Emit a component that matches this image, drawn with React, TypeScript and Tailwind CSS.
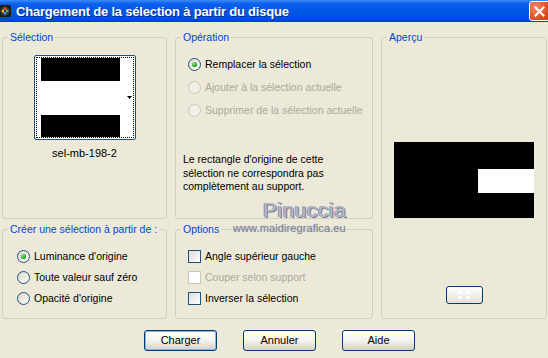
import React from "react";

const font = { fontFamily: '"Liberation Sans", Arial, sans-serif' };

function GroupBox({ title, className, children }: { title: string; className?: string; children?: React.ReactNode }) {
  return (
    <div className={"flex flex-col border border-[#D0D0BF] rounded-[3px] " + (className ?? "")}>
      <span className="self-start -mt-[7px] ml-[5px] whitespace-nowrap px-[2px] bg-[#ECE9D8] text-[#0046D5] leading-[13px]">
        {title}
      </span>
      {children}
    </div>
  );
}

function Radio({ checked, disabled }: { checked?: boolean; disabled?: boolean }) {
  if (disabled) {
    return <div className="w-[13px] h-[13px] rounded-full border border-[#CAC8BB] bg-[#F1EFE6]" />;
  }
  return (
    <div className="w-[13px] h-[13px] rounded-full border border-[#1C5180] bg-gradient-to-br from-[#DCD9C5] to-white flex items-center justify-center">
      {checked && <div className="w-[5px] h-[5px] rounded-full bg-[radial-gradient(circle_at_35%_35%,#8CE48C,#21A121_60%,#1A7F1A)]" />}
    </div>
  );
}

function Check({ disabled }: { disabled?: boolean }) {
  if (disabled) {
    return <div className="w-[13px] h-[13px] border border-[#CAC8BB] bg-white" />;
  }
  return <div className="w-[13px] h-[13px] border border-[#1C5180] bg-gradient-to-br from-[#DCDCD7] to-white" />;
}

function XPButton({ label, isDefault }: { label: string; isDefault?: boolean }) {
  return (
    <div
      className={
        "w-[73px] h-[21px] rounded-[3px] border border-[#003C74] bg-gradient-to-b from-white via-[#F4F3EE] to-[#D6D0C5] flex items-center justify-center text-black " +
        (isDefault ? "shadow-[inset_0_0_0_1px_#8DB2E3]" : "")
      }
    >
      {label}
    </div>
  );
}

function OptionRow({ children, text, disabled, h }: { children: React.ReactNode; text: string; disabled?: boolean; h: string }) {
  return (
    <div className={"flex items-center gap-[4px] " + h}>
      {children}
      <span className={disabled ? "text-[#ACA899]" : "text-black"}>{text}</span>
    </div>
  );
}

export default function App() {
  return (
    <div className="relative w-[548px] h-[358px] overflow-hidden bg-[#ECE9D8] text-[10.5px] leading-[13px]" style={font}>
      {/* title bar */}
      <div className="h-[22px] flex items-center bg-[linear-gradient(to_bottom,#3A8BF8_0%,#0A5FEB_18%,#0055E5_50%,#0050E0_85%,#0040C8_100%)]">
        <svg width="14" height="14" viewBox="0 0 14 14" className="-ml-[2px] mr-[4px]">
          <rect x="1" y="1" width="12" height="12" rx="2" fill="#1b1b1b" />
          <circle cx="7" cy="7" r="4.5" fill="#3b3b3b" />
          <path d="M7 2.5 L9 6 L5 6 Z" fill="#e04040" />
          <path d="M11 7 L8 9 L8 5 Z" fill="#40c040" />
          <path d="M7 11.5 L5 8 L9 8 Z" fill="#4080f0" />
          <path d="M3 7 L6 5 L6 9 Z" fill="#e0c030" />
        </svg>
        <span className="text-white font-bold text-[13px] tracking-[-0.2px] [text-shadow:1px_1px_0_#0A2A8A]">
          Chargement de la sélection à partir du disque
        </span>
        <div className="ml-auto mr-[-2px] w-[21px] h-[20px] rounded-[3px] border border-white bg-[radial-gradient(circle_at_30%_30%,#F08A6A,#E0502A_60%,#C03A18)] flex items-center justify-center">
          <svg width="11" height="11" viewBox="0 0 11 11">
            <path d="M1.5 1.5 L9.5 9.5 M9.5 1.5 L1.5 9.5" stroke="white" strokeWidth="2" strokeLinecap="square" />
          </svg>
        </div>
      </div>

      {/* groups */}
      <div className="grid grid-cols-[165px_198px_166px] grid-rows-[182px_90px] gap-x-[8px] gap-y-[10px] pl-[2px] pt-[15px]">
        <GroupBox title="Sélection">
          <div className="flex flex-col items-center">
            <div className="mt-[11px] w-[102px] h-[85px] border border-[#1C5180] rounded-[2px] bg-white p-[1px]">
              <div className="h-full border border-dotted border-black flex">
                <div className="ml-[4px] w-[79px] flex flex-col">
                  <div className="h-[23px] bg-black" />
                  <div className="h-[34px] bg-white" />
                  <div className="h-[22px] bg-black" />
                </div>
                <div className="flex-1 flex items-center justify-end pr-[1px]">
                  <svg width="5" height="3" viewBox="0 0 5 3">
                    <path d="M0 0 L5 0 L2.5 3 Z" fill="black" />
                  </svg>
                </div>
              </div>
            </div>
            <span className="mt-[7px] text-black text-[11px]">sel-mb-198-2</span>
          </div>
        </GroupBox>

        <GroupBox title="Opération">
          <div className="mt-[9px] pl-[12px] flex flex-col">
            <OptionRow text="Remplacer la sélection" h="h-[23px]">
              <Radio checked />
            </OptionRow>
            <OptionRow text="Ajouter à la sélection actuelle" disabled h="h-[23px]">
              <Radio disabled />
            </OptionRow>
            <OptionRow text="Supprimer de la sélection actuelle" disabled h="h-[23px]">
              <Radio disabled />
            </OptionRow>
          </div>
          <p className="mt-[31px] ml-[7px] leading-[13.5px] text-black">
            Le rectangle d'origine de cette
            <br />
            sélection ne correspondra pas
            <br />
            complètement au support.
          </p>
        </GroupBox>

        <GroupBox title="Aperçu" className="row-span-2 items-center">
          <div className="mt-[98px] w-[140px] h-[76px] bg-black flex justify-end">
            <div className="mt-[27px] w-[56px] h-[24px] bg-white" />
          </div>
          <div className="mt-[68px] w-[37px] h-[18px] rounded-[3px] border border-[#003C74] bg-gradient-to-b from-white to-[#E3E0D6] flex items-center justify-center">
            <div className="w-[12px] h-[8px] border-t-[3px] border-b-[3px] border-dotted border-white" />
          </div>
        </GroupBox>

        <GroupBox title="Créer une sélection à partir de :">
          <div className="mt-[10px] pl-[14px] flex flex-col">
            <OptionRow text="Luminance d'origine" h="h-[21px]">
              <Radio checked />
            </OptionRow>
            <OptionRow text="Toute valeur sauf zéro" h="h-[21px]">
              <Radio />
            </OptionRow>
            <OptionRow text="Opacité d'origine" h="h-[21px]">
              <Radio />
            </OptionRow>
          </div>
        </GroupBox>

        <GroupBox title="Options">
          <div className="mt-[10px] pl-[12px] flex flex-col">
            <OptionRow text="Angle supérieur gauche" h="h-[21px]">
              <Check />
            </OptionRow>
            <OptionRow text="Couper selon support" disabled h="h-[21px]">
              <Check disabled />
            </OptionRow>
            <OptionRow text="Inverser la sélection" h="h-[21px]">
              <Check />
            </OptionRow>
          </div>
        </GroupBox>
      </div>

      {/* buttons */}
      <div className="mt-[11px] pl-[144px] flex gap-[26px] text-[11px]">
        <XPButton label="Charger" isDefault />
        <XPButton label="Annuler" />
        <XPButton label="Aide" />
      </div>

      {/* watermark */}
      <span className="absolute left-[263px] top-[198px] text-[21px] leading-[24px] tracking-[0.5px] text-[#B3B8CB] [text-shadow:1px_1px_0_#767C94,-1px_0_0_#8D93A8]">
        Pinuccia
      </span>
      <span className="absolute left-[233px] top-[222px] text-[11px] tracking-[0.1px] text-[#80869A] [text-shadow:0_0_1px_#A9AEBF]">
        www.maidiregrafica.eu
      </span>
    </div>
  );
}
